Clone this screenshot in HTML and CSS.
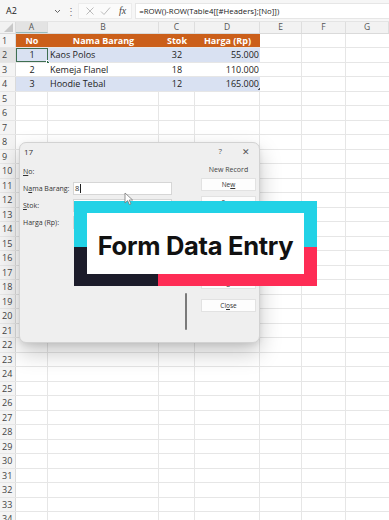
FILE: index.html
```html
<!DOCTYPE html>
<html>
<head>
<meta charset="utf-8">
<link rel="stylesheet" href="styles.css">
</head>
<body>
<div class="app">
  <div class="fbar">
    <div class="namebox">
      <span class="ref">A2</span>
      <svg class="chev" width="7" height="5" viewBox="0 0 7 5"><path d="M1 1l2.5 2.5L6 1" fill="none" stroke="#666" stroke-width="1"/></svg>
    </div>
    <span class="dots">⋮</span>
    <div class="fbtns">
      <svg width="10" height="10" viewBox="0 0 10 10"><path d="M1.5 1.5l7 7M8.5 1.5l-7 7" stroke="#bbb" stroke-width="1" fill="none"/></svg>
      <svg width="11" height="10" viewBox="0 0 11 10"><path d="M1 5.5l3 3L10 1.5" stroke="#bbb" stroke-width="1" fill="none"/></svg>
      <span class="fx">fx</span>
    </div>
    <div class="formula">=ROW()-ROW(Table4[[#Headers];[No]])</div>
  </div>

  <div class="colhdr">
    <span class="corner"><svg width="9" height="9" viewBox="0 0 9 9"><path d="M9 0V9H0z" fill="#c8c8c8"/></svg></span>
    <span class="ch ca sel">A</span>
    <span class="ch cb">B</span>
    <span class="ch cc">C</span>
    <span class="ch cd">D</span>
    <span class="ch ce">E</span>
    <span class="ch cf">F</span>
    <span class="ch cg">G</span>
  </div>

  <div class="sheet">
    <div class="row thead">
      <span class="rh">1</span>
      <span class="c ca ctr">No</span>
      <span class="c cb ctr">Nama Barang</span>
      <span class="c cc ctr">Stok</span>
      <span class="c cd ctr">Harga (Rp)</span>
    </div>
    <div class="row band">
      <span class="rh sel">2</span>
      <span class="c ca ctr active">1<i class="handle"></i></span>
      <span class="c cb">Kaos Polos</span>
      <span class="c cc ctr">32</span>
      <span class="c cd num">55.000</span>
    </div>
    <div class="row plain">
      <span class="rh">3</span>
      <span class="c ca ctr">2</span>
      <span class="c cb">Kemeja Flanel</span>
      <span class="c cc ctr">18</span>
      <span class="c cd num">110.000</span>
    </div>
    <div class="row band">
      <span class="rh">4</span>
      <span class="c ca ctr">3</span>
      <span class="c cb">Hoodie Tebal</span>
      <span class="c cc ctr">12</span>
      <span class="c cd num">165.000<i class="resize"></i></span>
    </div>
    <div class="row"><span class="rh">5</span></div>
    <div class="row"><span class="rh">6</span></div>
    <div class="row"><span class="rh">7</span></div>
    <div class="row"><span class="rh">8</span></div>
    <div class="row"><span class="rh">9</span></div>
    <div class="row"><span class="rh">10</span></div>
    <div class="row"><span class="rh">11</span></div>
    <div class="row"><span class="rh">12</span></div>
    <div class="row"><span class="rh">13</span></div>
    <div class="row"><span class="rh">14</span></div>
    <div class="row"><span class="rh">15</span></div>
    <div class="row"><span class="rh">16</span></div>
    <div class="row"><span class="rh">17</span></div>
    <div class="row"><span class="rh">18</span></div>
    <div class="row"><span class="rh">19</span></div>
    <div class="row"><span class="rh">20</span></div>
    <div class="row"><span class="rh">21</span></div>
    <div class="row"><span class="rh">22</span></div>
    <div class="row"><span class="rh">23</span></div>
    <div class="row"><span class="rh">24</span></div>
    <div class="row"><span class="rh">25</span></div>
    <div class="row"><span class="rh">26</span></div>
    <div class="row"><span class="rh">27</span></div>
    <div class="row"><span class="rh">28</span></div>
    <div class="row"><span class="rh">29</span></div>
    <div class="row"><span class="rh">30</span></div>
    <div class="row"><span class="rh">31</span></div>
    <div class="row"><span class="rh">32</span></div>
    <div class="row"><span class="rh">33</span></div>
    <div class="row"><span class="rh">34</span></div>
  </div>

  <div class="dialog">
    <div class="dtitle">
      <span>17</span>
      <span class="tbtns"><span class="q">?</span><span class="close">✕</span></span>
    </div>
    <div class="dbody">
      <div class="fields">
        <div class="frow"><label><u>N</u>o:</label></div>
        <div class="frow"><label>N<u>a</u>ma Barang:</label><div class="tb">8<i class="caret"></i></div></div>
        <div class="frow"><label><u>S</u>tok:</label><div class="tb"></div></div>
        <div class="frow"><label>Harga (Rp):</label><div class="tb"></div></div>
      </div>
      <div class="scrollcol"><div class="sbar"></div></div>
      <div class="actions">
        <div class="alabel">New Record</div>
        <div class="btn">Ne<u>w</u></div>
        <div class="btn">Save</div>
        <div class="btn">Delete</div>
        <div class="btn low">Right</div>
        <div class="btn">Cl<u>o</u>se</div>
      </div>
    </div>
  </div>

  <div class="banner">
    <div class="bwhite">Form Data Entry</div>
  </div>

  <svg class="cursor" width="10" height="14" viewBox="0 0 10 14"><path d="M1 1v10l2.6-2.4 1.8 4 1.6-.7-1.8-3.9H8.6z" fill="#fff" stroke="#777" stroke-width="0.8" stroke-linejoin="round"/></svg>
</div>
</body>
</html>
```

FILE: styles.css
```css
* { box-sizing: border-box; margin: 0; padding: 0; }
html, body { width: 389px; height: 520px; overflow: hidden; background: #fff; }
body { font-family: "Open Sans", "Noto Sans", sans-serif; color: #222; }
.app { position: relative; width: 389px; height: 520px; overflow: hidden; }

/* formula bar */
.fbar { height: 22px; display: flex; align-items: center; background: #f6f6f6; padding: 0 0 0 2px; border-bottom: 1px solid #e4e4e4; }
.namebox { width: 63px; height: 16px; display: flex; align-items: center; justify-content: space-between; padding: 0 4px 0 4px; font-size: 9px; color: #222; }
.chev { margin-top: 1px; }
.dots { font-size: 10px; color: #777; width: 10px; text-align: center; margin-left: 1px; }
.fbtns { display: flex; align-items: center; gap: 5px; height: 16px; padding: 0 5px 0 6px; background: #fbfbfb; border: 1px solid #ececec; margin-left: 2px; }
.fx { font-family: "Liberation Serif", serif; font-style: italic; font-size: 10px; color: #444; margin-left: 3px; }
.formula { flex: 1; height: 16px; margin-left: 3px; background: #fff; border: 1px solid #e6e6e6; border-right: none; font-size: 7.8px; line-height: 14px; padding-left: 3px; color: #222; white-space: nowrap; overflow: hidden; }

/* column header */
.colhdr { height: 11.5px; display: flex; background: #f2f2f2; border-bottom: 1px solid #dadada; font-size: 8.5px; color: #555; line-height: 10.5px; }
.corner { width: 16px; display: flex; align-items: flex-end; justify-content: flex-end; padding: 0 2px 1px 0; border-right: 1px solid #dadada; }
.ch { text-align: center; border-right: 1px solid #dedede; }
.ch.sel { background: #e3e3e3; border-bottom: 1px solid #9bb; }
.ca { width: 32px; }
.cb { width: 111px; }
.cc { width: 36px; }
.cd { width: 65px; }
.ce { width: 42px; }
.cf { width: 44px; }
.cg { flex: 1; }

/* sheet */
.sheet { display: flex; flex-direction: column; }
.row { height: 14.5px; display: flex; border-bottom: 1px solid #e6e6e6;
  background: linear-gradient(to right, transparent 0 47px, #e6e6e6 47px 48px, transparent 48px 158px, #e6e6e6 158px 159px, transparent 159px 194px, #e6e6e6 194px 195px, transparent 195px 259px, #e6e6e6 259px 260px, transparent 260px 301px, #e6e6e6 301px 302px, transparent 302px 345px, #e6e6e6 345px 346px, transparent 346px); }
.rh { width: 16px; flex: none; background: #f4f4f4; border-right: 1px solid #dadada; font-size: 9px; color: #444; line-height: 13.5px; padding-left: 2px; }
.rh.sel { background: #e3e3e3; }
.c { font-size: 9px; line-height: 13.5px; padding: 0 2px; white-space: nowrap; position: relative; }
.ctr { text-align: center; }
.num { text-align: right; padding-right: 1px; }
.thead .c { background: #cb5f1a; color: #fff; font-weight: 700; }
.band .c { background: #d9e1f2; }
.plain .c { background: #fff; }
.active { box-shadow: inset 0 0 0 1px #3f6f52; }
.handle { position: absolute; right: -2px; bottom: -2px; width: 4px; height: 4px; background: #2e6b45; border: 1px solid #fff; }
.resize { position: absolute; right: 0; bottom: 1px; width: 3px; height: 3px; background: linear-gradient(135deg, transparent 50%, #555 50%); }

/* dialog */
.dialog { position: absolute; left: 19px; top: 142px; width: 241px; height: 201px; background: #efefef; border: 1px solid #d2d2d2; border-radius: 7px; box-shadow: 0 10px 22px rgba(0,0,0,0.22), 0 2px 5px rgba(0,0,0,0.08); font-size: 7px; color: #333; }
.dtitle { height: 16px; display: flex; justify-content: space-between; align-items: center; padding: 1px 0 0 4px; font-size: 8px; color: #333; }
.tbtns { display: flex; gap: 20px; padding-right: 9px; font-size: 8px; color: #555; }
.tbtns .close { font-size: 9px; }
.dbody { display: flex; }
.fields { width: 160px; padding: 6px 0 0 3px; display: flex; flex-direction: column; gap: 4px; }
.frow { height: 13px; display: flex; align-items: center; }
.frow label { width: 50px; font-size: 7px; color: #333; }
.frow label u { text-decoration-thickness: 0.5px; }
.tb { width: 99px; height: 13px; background: #fff; border: 1px solid #d6d6d6; font-size: 7.5px; line-height: 11px; padding-left: 1px; display: flex; align-items: center; }
.caret { display: inline-block; width: 1px; height: 9px; background: #222; margin-left: 1px; }
.scrollcol { width: 21px; padding: 134px 0 0 5px; }
.sbar { width: 2px; height: 37px; background: #7a7a7a; border-radius: 1px; }
.actions { width: 55px; display: flex; flex-direction: column; }
.alabel { height: 13px; margin-top: 6px; text-align: center; font-size: 7px; color: #444; line-height: 9px; }
.btn { height: 13px; background: #fdfdfd; border: 1px solid #e2e2e2; text-align: center; font-size: 6.5px; line-height: 11px; color: #333; margin-bottom: 5px; }
.btn.low { margin-top: 44px; margin-bottom: 10px; }

/* banner */
.banner { position: absolute; left: 74px; top: 201px; width: 243px; height: 85px; padding: 12px 0 0 13px;
  background: linear-gradient(to right, #1c1c2a 0 84px, #fe2c55 84px) left bottom / 100% 39px no-repeat, #22d2e6; }
.bwhite { width: 217px; height: 61px; background: #fff; display: flex; align-items: center; justify-content: center; font-family: Inter, "Noto Sans", sans-serif; font-weight: 700; font-size: 25.5px; color: #111; letter-spacing: -0.3px; padding-top: 3px; }

.cursor { position: absolute; left: 124px; top: 192px; }
```
